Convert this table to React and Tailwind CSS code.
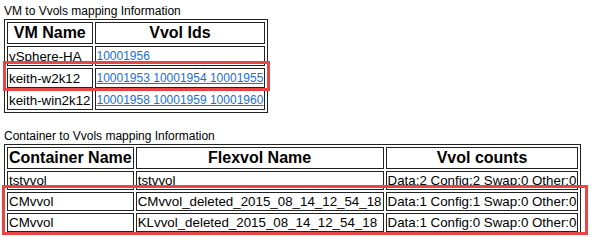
export default function App() {
  const vms = [
    { name: "vSphere-HA", ids: ["10001956"], underline: false },
    { name: "keith-w2k12", ids: ["10001953", "10001954", "10001955"], underline: true },
    { name: "keith-win2k12", ids: ["10001958", "10001959", "10001960"], underline: true },
  ];
  const containers = [
    { c: "tstvvol", f: "tstvvol", counts: "Data:2 Config:2 Swap:0 Other:0" },
    { c: "CMvvol", f: "CMvvol_deleted_2015_08_14_12_54_18", counts: "Data:1 Config:1 Swap:0 Other:0" },
    { c: "CMvvol", f: "KLvvol_deleted_2015_08_14_12_54_18", counts: "Data:1 Config:0 Swap:0 Other:0" },
  ];
  const th = "border border-[#222] px-[1px] py-[1px] text-[16px] leading-[18px] font-bold text-center align-middle";
  const td = "border border-[#222] px-[1px] py-[1px] text-[13.33px] leading-[15px] text-left align-middle whitespace-nowrap";

  return (
    <div className="relative bg-white text-black min-h-[244px] px-[4px] pt-[4px]" style={{ fontFamily: '"Liberation Sans", Arial, sans-serif' }}>
      <div className="text-[12px] leading-[15px]">VM to Vvols mapping Information</div>
      <table className="border border-[#222] border-separate border-spacing-[2px]">
        <thead>
          <tr>
            <th className={th}>VM Name</th>
            <th className={th}>Vvol Ids</th>
          </tr>
        </thead>
        <tbody>
          {vms.map((v) => (
            <tr key={v.name}>
              <td className={td}>{v.name}</td>
              <td className={td}>
                <span className={"text-[12px] text-[#1a6fd4] " + (v.underline ? "underline" : "no-underline")}>
                  {v.ids.join(" ")}
                </span>
              </td>
            </tr>
          ))}
        </tbody>
      </table>

      <div className="text-[12px] leading-[15px] mt-[16px]">Container to Vvols mapping Information</div>
      <table className="border border-[#222] border-separate border-spacing-[2px]">
        <thead>
          <tr>
            <th className={th}>Container Name</th>
            <th className={th}>Flexvol Name</th>
            <th className={th}>Vvol counts</th>
          </tr>
        </thead>
        <tbody>
          {containers.map((r, i) => (
            <tr key={i}>
              <td className={td}>{r.c}</td>
              <td className={td}>{r.f}</td>
              <td className={td}>{r.counts}</td>
            </tr>
          ))}
        </tbody>
      </table>

      {/* highlight frames drawn over the tables */}
      <div className="absolute left-[3px] top-[61px] w-[267px] h-[30px] border-[3px] border-[#e84545] pointer-events-none" />
      <div className="absolute left-[2px] top-[185px] w-[586px] h-[50px] border-[3px] border-[#e84545] pointer-events-none" />
    </div>
  );
}
